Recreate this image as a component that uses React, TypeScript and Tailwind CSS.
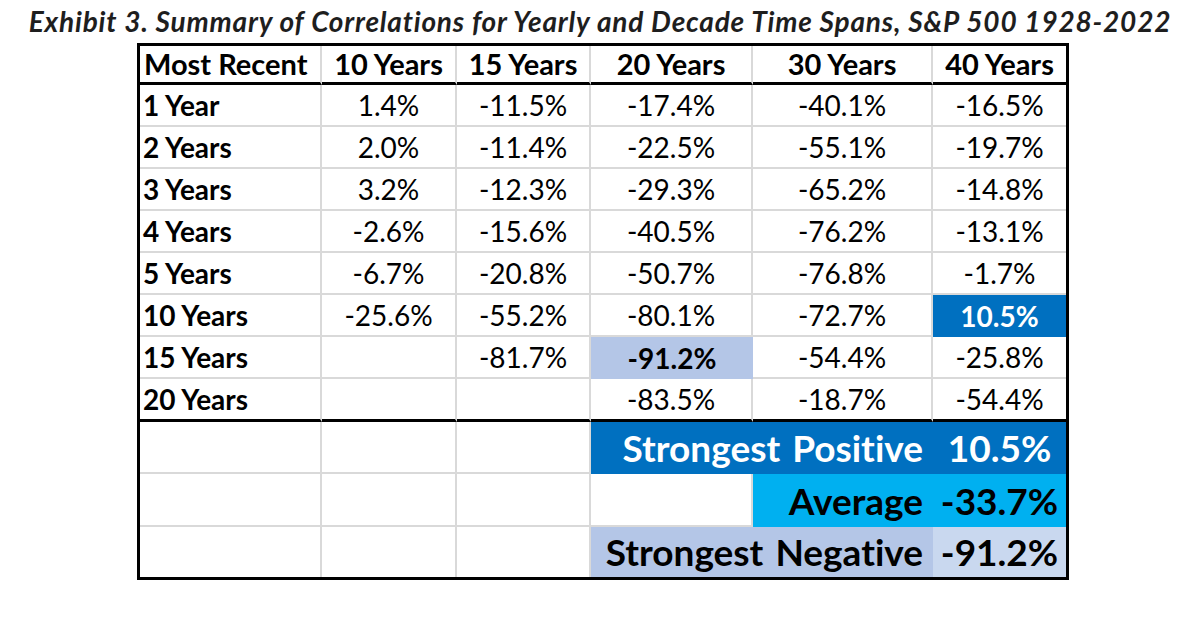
import React from "react";

type Tone = "plain" | "pos" | "neg";

const rows: { label: string; values: string[]; tones?: Tone[] }[] = [
  { label: "1 Year", values: ["1.4%", "-11.5%", "-17.4%", "-40.1%", "-16.5%"] },
  { label: "2 Years", values: ["2.0%", "-11.4%", "-22.5%", "-55.1%", "-19.7%"] },
  { label: "3 Years", values: ["3.2%", "-12.3%", "-29.3%", "-65.2%", "-14.8%"] },
  { label: "4 Years", values: ["-2.6%", "-15.6%", "-40.5%", "-76.2%", "-13.1%"] },
  { label: "5 Years", values: ["-6.7%", "-20.8%", "-50.7%", "-76.8%", "-1.7%"] },
  {
    label: "10 Years",
    values: ["-25.6%", "-55.2%", "-80.1%", "-72.7%", "10.5%"],
    tones: ["plain", "plain", "plain", "plain", "pos"],
  },
  {
    label: "15 Years",
    values: ["", "-81.7%", "-91.2%", "-54.4%", "-25.8%"],
    tones: ["plain", "plain", "neg", "plain", "plain"],
  },
  { label: "20 Years", values: ["", "", "-83.5%", "-18.7%", "-54.4%"] },
];

const headers = ["10 Years", "15 Years", "20 Years", "30 Years", "40 Years"];

export default function App() {
  return (
    <div className="w-[1200px] h-[619px] bg-white text-black font-['Lato',sans-serif] [font-variant-ligatures:none]">
      {/* Titel */}
      <div className="pt-[5px] h-[43px] text-center text-[28px] leading-[32px] font-bold italic text-[#1e1e1e] tracking-[0.8px]">
        Exhibit 3. Summary of Correlations for Yearly and Decade Time Spans, S&amp;P 500 1928-2022
      </div>

      <div className="ml-[137px] w-[932px] border-[3px] border-black grid grid-cols-[182px_135px_134px_162px_180px_133px]">
        {/* Header */}
        <div className="h-[39px] border-b-[3px] border-r-2 border-b-black border-r-[#d9d9d9] flex items-center pl-[4px] text-[29px] font-bold">
          Most Recent
        </div>
        {headers.map((h, i) => (
          <div
            key={h}
            className={
              i === headers.length - 1
                ? "h-[39px] border-b-[3px] border-b-black flex items-center justify-center text-[29px] font-bold"
                : "h-[39px] border-b-[3px] border-r-2 border-b-black border-r-[#d9d9d9] flex items-center justify-center text-[29px] font-bold"
            }
          >
            {h}
          </div>
        ))}

        {/* Tabelrækker */}
        {rows.map((row, r) => {
          const last = r === rows.length - 1;
          return (
            <React.Fragment key={row.label}>
              <div
                className={
                  last
                    ? "h-[43px] border-b-[3px] border-r-2 border-b-black border-r-[#d9d9d9] flex items-center pl-[3px] text-[28px] font-bold"
                    : "h-[42px] border-b-2 border-r-2 border-[#d9d9d9] flex items-center pl-[3px] text-[28px] font-bold"
                }
              >
                {row.label}
              </div>
              {row.values.map((v, c) => {
                const tone = row.tones?.[c] ?? "plain";
                const edge = c === row.values.length - 1;
                let cls = "";
                if (tone === "pos") {
                  cls =
                    "h-[42px] bg-[#0070c0] text-white font-bold flex items-center justify-center text-[28px]";
                } else if (tone === "neg") {
                  cls =
                    "h-[42px] bg-[#b4c6e7] font-bold flex items-center justify-center text-[28px]";
                } else if (last && edge) {
                  cls =
                    "h-[43px] border-b-[3px] border-b-black flex items-center justify-center text-[28px]";
                } else if (last) {
                  cls =
                    "h-[43px] border-b-[3px] border-r-2 border-b-black border-r-[#d9d9d9] flex items-center justify-center text-[28px]";
                } else if (edge) {
                  cls =
                    "h-[42px] border-b-2 border-[#d9d9d9] flex items-center justify-center text-[28px]";
                } else {
                  cls =
                    "h-[42px] border-b-2 border-r-2 border-[#d9d9d9] flex items-center justify-center text-[28px]";
                }
                return (
                  <div key={c} className={cls}>
                    {v}
                  </div>
                );
              })}
            </React.Fragment>
          );
        })}

        {/* Opsummering */}
        <div className="h-[52px] border-b-2 border-r-2 border-[#d9d9d9]" />
        <div className="h-[52px] border-b-2 border-r-2 border-[#d9d9d9]" />
        <div className="h-[52px] border-b-2 border-r-2 border-[#d9d9d9]" />
        <div className="col-span-2 h-[52px] bg-[#0070c0] text-white font-bold text-[37px] flex items-center justify-end pr-[10px] [word-spacing:3px]">
          Strongest Positive
        </div>
        <div className="h-[52px] bg-[#0070c0] text-white font-bold text-[37px] flex items-center justify-center">
          10.5%
        </div>

        <div className="h-[53px] border-b-2 border-r-2 border-[#d9d9d9]" />
        <div className="h-[53px] border-b-2 border-r-2 border-[#d9d9d9]" />
        <div className="h-[53px] border-b-2 border-r-2 border-[#d9d9d9]" />
        <div className="h-[53px] border-b-2 border-r-2 border-[#d9d9d9]" />
        <div className="h-[53px] bg-[#00b0f0] font-bold text-[37px] flex items-center justify-end pr-[10px]">
          Average
        </div>
        <div className="h-[53px] bg-[#00b0f0] font-bold text-[37px] flex items-center justify-center">
          -33.7%
        </div>

        <div className="h-[50px] border-r-2 border-[#d9d9d9]" />
        <div className="h-[50px] border-r-2 border-[#d9d9d9]" />
        <div className="h-[50px] border-r-2 border-[#d9d9d9]" />
        <div className="col-span-2 h-[50px] bg-[#b4c6e7] font-bold text-[37px] flex items-center justify-end pr-[10px] [word-spacing:3px]">
          Strongest Negative
        </div>
        <div className="h-[50px] bg-[#c9d8ef] font-bold text-[37px] flex items-center justify-center">
          -91.2%
        </div>
      </div>
    </div>
  );
}
